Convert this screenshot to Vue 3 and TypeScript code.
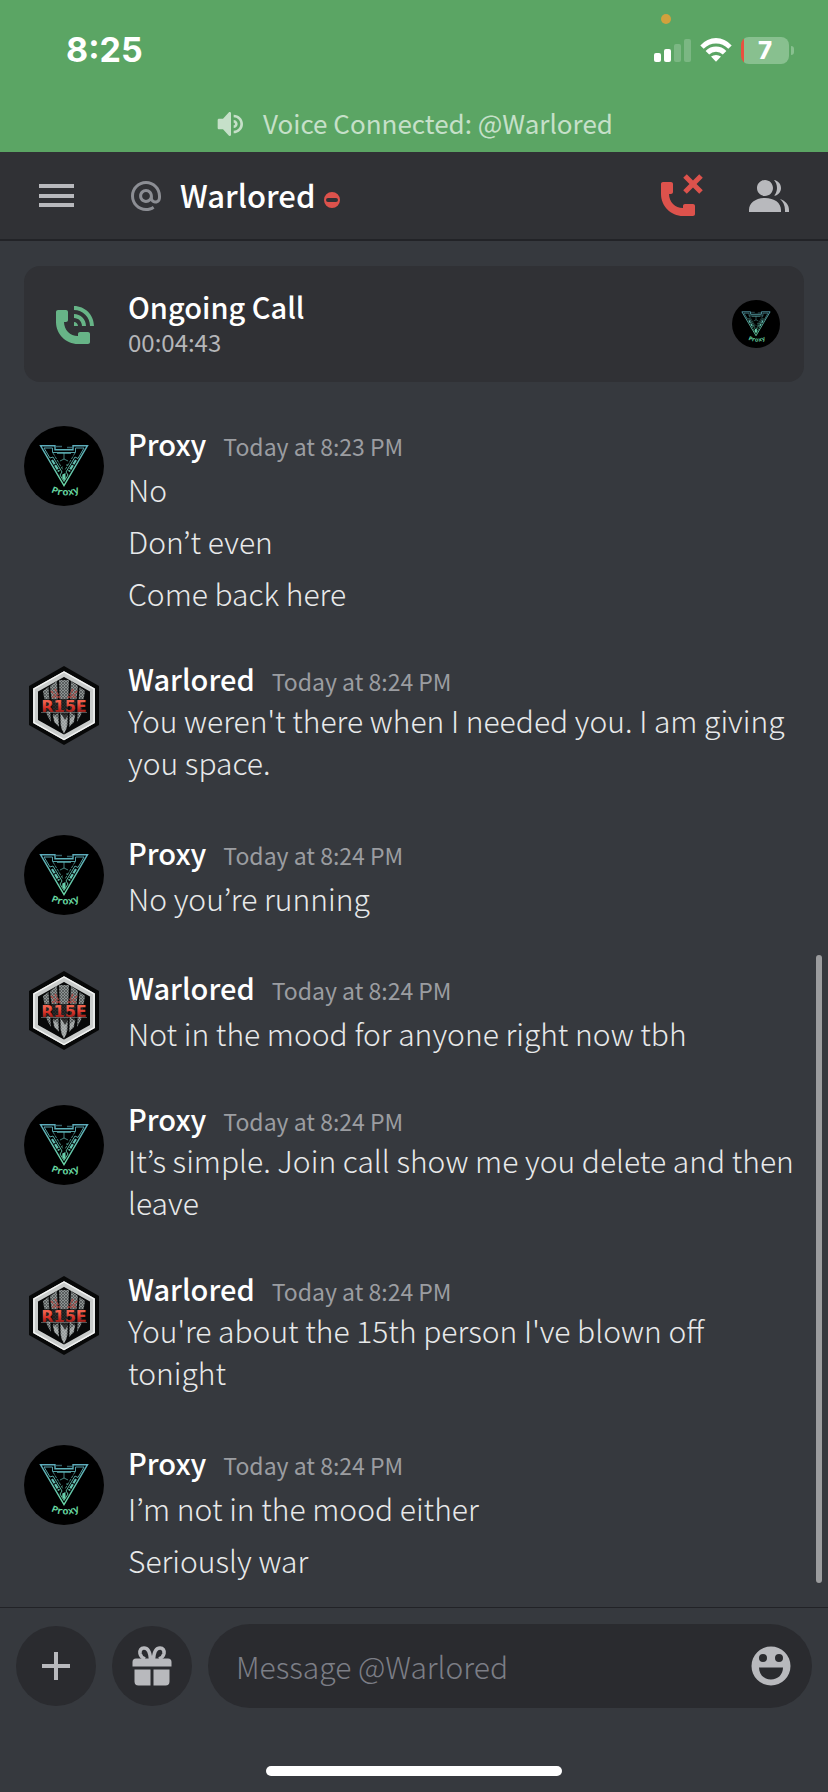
<script setup lang="ts">
import { ref } from 'vue'

type Author = 'Proxy' | 'Warlored'

interface MessageGroup {
  id: number
  author: Author
  time: string
  lines: string[]
  long?: boolean
}

const avatars: Record<Author, string> = {
  Proxy: '#avatar-proxy',
  Warlored: '#avatar-rise',
}

const groups: MessageGroup[] = [
  { id: 1, author: 'Proxy', time: 'Today at 8:23 PM', lines: ['No', 'Don’t even', 'Come back here'] },
  { id: 2, author: 'Warlored', time: 'Today at 8:24 PM', lines: ["You weren't there when I needed you. I am giving you space."], long: true },
  { id: 3, author: 'Proxy', time: 'Today at 8:24 PM', lines: ['No you’re running'] },
  { id: 4, author: 'Warlored', time: 'Today at 8:24 PM', lines: ['Not in the mood for anyone right now tbh'] },
  { id: 5, author: 'Proxy', time: 'Today at 8:24 PM', lines: ['It’s simple. Join call show me you delete and then leave'], long: true },
  { id: 6, author: 'Warlored', time: 'Today at 8:24 PM', lines: ["You're about the 15th person I've blown off tonight"], long: true },
  { id: 7, author: 'Proxy', time: 'Today at 8:24 PM', lines: ['I’m not in the mood either', 'Seriously war'] },
]

const draft = ref('')
</script>

<template>
  <div class="app">
    <svg class="sprites" aria-hidden="true">
      <defs>
        <linearGradient id="neon" x1="0" y1="18" x2="0" y2="70" gradientUnits="userSpaceOnUse">
          <stop offset="0" stop-color="#5ba9bb" />
          <stop offset="1" stop-color="#6ee3a0" />
        </linearGradient>
        <linearGradient id="crimson" x1="0" y1="0" x2="0" y2="1">
          <stop offset="0.3" stop-color="#f0604c" />
          <stop offset="0.6" stop-color="#d22f26" />
          <stop offset="0.9" stop-color="#7a1a16" />
        </linearGradient>
        <pattern id="weave" width="3" height="3" patternUnits="userSpaceOnUse">
          <rect width="3" height="3" fill="#8c9291" />
          <path d="M0 0L3 3M3 0L0 3" stroke="#474c4c" stroke-width="0.7" />
        </pattern>
        <path id="smile" d="M25 65Q40 74 58 65" />
        <symbol id="avatar-proxy" viewBox="0 0 80 80">
          <circle cx="40" cy="40" r="40" fill="#000" />
          <g fill="none" stroke="url(#neon)">
            <path d="M16.5 19.7H31V23.8H49V19.7H63.5L40 59.5Z" stroke-width="1.4" />
            <path d="M20 22H28.5V26.5H51.500V22H60L54 32.500" stroke-width="0.9" />
            <path d="M20 22L26 32L29 31L38 46L36 49L40 55.500L44 49L42 46L51 31L54 32.500" stroke-width="0.9" />
            <path d="M29 27L39 44M51 27L41 44" stroke-width="0.7" stroke-dasharray="3 1" />
            <path d="M40 27V33M33 27.500H47M36 35L40 33L44 35M38 41H38.800M43 38V40" stroke-width="0.7" />
            <path d="M28 34L35 45.500M52 34L45 45.500" stroke-width="2.200" stroke-dasharray="5 1" />
            <path d="M32 20.500H38M43 21.500H48" stroke-width="1.300" opacity="0.55" />
          </g>
          <path d="M38.300 48.500L41.500 47V53L40 54.500L38.300 52Z" fill="url(#neon)" />
          <text class="proxy-mark" fill="#68d6a1"><textPath href="#smile" startOffset="50%" text-anchor="middle">Proxy</textPath></text>
        </symbol>
        <symbol id="avatar-rise" viewBox="0 0 80 80">
          <path d="M40 1L75 21V60L40 80L5 60V21Z" fill="#070808" />
          <path d="M40 9L68.500 25V56.500L40 72.500L11.500 56.500V25Z" fill="#080909" stroke="#c9cccb" stroke-width="5" />
          <path d="M40 7L70 24V57.500L40 74.500L10 57.500V24Z" fill="none" stroke="#f4f5f4" stroke-width="1.400" />
          <g fill="url(#weave)">
            <path d="M19 26L24.500 22L27 57L23 50Z" />
            <path d="M26 21L33 16L35 62L30 57Z" />
            <path d="M35 15H45L43.500 60L40 69L36.500 60Z" />
            <path d="M47 16L54 21L50 57L45 62Z" />
            <path d="M55.500 22L61 26L57 50L53 57Z" />
          </g>
          <path d="M37 50H43L42.500 64L40 68L37.500 64ZM28.500 50L34 54V60L31 57ZM51.500 50L46 54V60L49 57Z" fill="#c3c8c6" opacity="0.6" />
          <path d="M27 26L34 33M31 24L36 33M53 26L46 33M49 24L44 33M28 32H35M45 32H52" fill="none" stroke="#b5453f" stroke-width="1.600" stroke-dasharray="3 1" opacity="0.8" />
          <path d="M15 34H65V46.500H56L50 50L46 47L41 55L36 47L31 50L25 46.500H15Z" fill="#090909" opacity="0.75" />
          <text class="rise-mark" x="40" y="46.500" text-anchor="middle" fill="url(#crimson)">R15E</text>
          <path d="M17 47.500H63" stroke="#bfc3c2" stroke-width="0.6" opacity="0.7" />
        </symbol>
      </defs>
    </svg>

    <header class="top">
      <div class="status">
        <span class="clock">8:25</span>
        <div class="indicators">
          <i class="mic-dot"></i>
          <svg class="signal" viewBox="0 0 37 23" aria-label="Signal">
            <rect y="14" width="7" height="9" rx="2" fill="#fff" />
            <rect x="10" y="10" width="7" height="13" rx="2" fill="#fff" />
            <rect x="20" y="5" width="7" height="18" rx="2" fill="#fff" opacity="0.2" />
            <rect x="30" width="7" height="23" rx="2" fill="#fff" opacity="0.2" />
          </svg>
          <svg class="wifi" viewBox="0 0 32 24" aria-label="Wi-Fi" fill="#fff">
            <path d="M0.300 7.500Q7 0 16 0T31.700 7.500L28.300 10.800Q23 5.500 16 5.500T3.700 10.800Z" />
            <path d="M5.600 13Q10 8.600 16 8.600T26.400 13L22.800 16.400Q20 13.800 16 13.800T9.200 16.400Z" />
            <path d="M11 18.600Q13.200 16.900 16 16.900T21 18.600L16 23.800Z" />
          </svg>
          <span class="battery"><b>7</b></span>
        </div>
      </div>
      <div class="voice">
        <svg viewBox="0 0 24 24" aria-hidden="true"><path d="M11.383 3.079C11.009 2.925 10.579 3.010 10.293 3.296L6 8.002H3C2.450 8.002 2 8.453 2 9.002V15.002C2 15.552 2.450 16.002 3 16.002H6L10.293 20.710C10.579 20.996 11.009 21.082 11.383 20.927C11.757 20.772 12 20.407 12 20.002V4.002C12 3.599 11.757 3.232 11.383 3.079ZM14 5.002V7.002C16.757 7.002 19 9.246 19 12.002C19 14.759 16.757 17.002 14 17.002V19.002C17.860 19.002 21 15.863 21 12.002C21 8.143 17.860 5.002 14 5.002ZM14 9.002C15.654 9.002 17 10.349 17 12.002C17 13.657 15.654 15.002 14 15.002V13.002C14.551 13.002 15 12.553 15 12.002C15 11.451 14.551 11.002 14 11.002V9.002Z" /></svg>
        <span>Voice Connected: @Warlored</span>
      </div>
    </header>

    <nav class="bar">
      <button class="icon-btn menu" type="button" aria-label="Menu">
        <svg viewBox="0 0 35 23"><path d="M0 0H35V4H0ZM0 10H35V14H0ZM0 19H35V23H0Z" /></svg>
      </button>
      <svg class="at" viewBox="0 0 24 24" aria-hidden="true"><path d="M12 2C6.486 2 2 6.486 2 12C2 17.515 6.486 22 12 22C14.039 22 15.993 21.398 17.652 20.259L16.521 18.611C15.195 19.519 13.633 20 12 20C7.589 20 4 16.411 4 12C4 7.589 7.589 4 12 4C16.411 4 20 7.589 20 12V12.782C20 14.170 19.402 15 18.400 15L18.398 15.018C18.338 15.005 18.273 15 18.209 15H18C17.437 15 16.600 14.182 16.600 13.631V12C16.600 9.464 14.537 7.400 12 7.400C9.463 7.400 7.400 9.463 7.400 12C7.400 14.537 9.463 16.600 12 16.600C13.234 16.600 14.350 16.106 15.177 15.313C15.826 16.269 16.930 17 18 17L18.002 16.981C18.064 16.994 18.129 17 18.195 17H18.400C20.552 17 22 15.306 22 12.782V12C22 6.486 17.514 2 12 2ZM12 14.599C10.566 14.599 9.400 13.433 9.400 11.999C9.400 10.565 10.566 9.399 12 9.399C13.434 9.399 14.600 10.565 14.600 11.999C14.600 13.433 13.434 14.599 12 14.599Z" /></svg>
      <h1>Warlored</h1>
      <svg class="dnd" viewBox="0 0 16 16" aria-label="Do not disturb"><path fill-rule="evenodd" d="M8 0A8 8 0 0 1 8 16A8 8 0 0 1 8 0ZM4 6A2 2 0 0 0 4 10H12A2 2 0 0 0 12 6Z" /></svg>
      <div class="actions">
        <button class="icon-btn hangup" type="button" aria-label="End call">
          <svg viewBox="0 0 24 24"><path d="M21.117 1.116L22.884 2.884L19.768 6L22.884 9.116L21.117 10.884L18 7.768L14.884 10.884L13.117 9.116L16.233 6L13.117 2.884L14.884 1.116L18 4.232L21.117 1.116ZM18 22H13C6.925 22 2 17.075 2 11V6C2 5.447 2.448 5 3 5H7C7.553 5 8 5.447 8 6V10C8 10.553 7.553 11 7 11H6C6.063 14.938 9 18 13 18V17C13 16.447 13.447 16 14 16H18C18.553 16 19 16.447 19 17V21C19 21.553 18.553 22 18 22Z" /></svg>
        </button>
        <button class="icon-btn" type="button" aria-label="Members">
          <svg viewBox="0 0 24 24"><path d="M14 8.006C14 10.211 12.206 12.006 10 12.006C7.795 12.006 6 10.211 6 8.006C6 5.801 7.794 4.006 10 4.006C12.206 4.006 14 5.801 14 8.006ZM2 19.006C2 15.473 5.290 13.006 10 13.006C14.711 13.006 18 15.473 18 19.006V20.006H2V19.006ZM20 20.006H22V19.006C22 16.443 20.270 14.441 17.521 13.535C19.062 14.913 20 16.806 20 19.006V20.006ZM14.883 11.908C16.666 11.504 18 9.908 18 8.006C18 5.969 16.469 4.282 14.497 4.037C15.432 5.095 16 6.485 16 8.006C16 9.449 15.489 10.774 14.638 11.810C14.720 11.842 14.802 11.874 14.883 11.908Z" /></svg>
        </button>
      </div>
    </nav>

    <main class="chat">
      <section class="call">
        <svg class="call-icon" viewBox="0 0 24 24" aria-hidden="true"><path d="M11 5V3C16.515 3 21 7.486 21 13H19C19 8.589 15.411 5 11 5ZM17 13H15C15 10.795 13.206 9 11 9V7C14.309 7 17 9.691 17 13ZM11 11V13H13C13 11.896 12.105 11 11 11ZM14 16H18C18.553 16 19 16.447 19 17V21C19 21.553 18.553 22 18 22H13C6.925 22 2 17.075 2 11V6C2 5.448 2.447 5 3 5H7C7.553 5 8 5.448 8 6V10C8 10.553 7.553 11 7 11H6C6.063 14.938 9 18 13 18V17C13 16.447 13.447 16 14 16Z" /></svg>
        <div class="call-text">
          <h2>Ongoing Call</h2>
          <p>00:04:43</p>
        </div>
        <svg class="call-avatar" viewBox="0 0 80 80" aria-hidden="true"><use href="#avatar-proxy" /></svg>
      </section>

      <article v-for="g in groups" :key="g.id" class="group" :class="{ long: g.long }">
        <svg class="avatar" viewBox="0 0 80 80" aria-hidden="true"><use :href="avatars[g.author]" /></svg>
        <div class="content">
          <div class="meta">
            <h3>{{ g.author }}</h3>
            <time>{{ g.time }}</time>
          </div>
          <p v-for="line in g.lines" :key="line">{{ line }}</p>
        </div>
      </article>
      <div class="scrollbar"></div>
    </main>

    <footer class="composer">
      <form class="row" @submit.prevent>
        <button class="round" type="button" aria-label="Add attachment">
          <svg viewBox="0 0 40 40"><path d="M18 6H22V18H34V22H22V34H18V22H6V18H18Z" /></svg>
        </button>
        <button class="round" type="button" aria-label="Send a gift">
          <svg viewBox="0 0 40 40">
            <path d="M0.500 20.500V16Q0.500 12.500 4 12.500H36Q39.500 12.500 39.500 16V20.500ZM2.500 23.500H18.500V39.500H6.500Q2.500 39.500 2.500 35.500ZM21.500 23.500H37.500V35.500Q37.500 39.500 33.500 39.500H21.500Z" />
            <path d="M18.500 13C18 5.500 15.500 2 12 2C9 2 7.500 4.500 8 7.500C8.500 10 10.500 12 13 13M21.500 13C22 5.500 24.500 2 28 2C31 2 32.500 4.500 32 7.500C31.500 10 29.500 12 27 13" fill="none" stroke="#b8b9bd" stroke-width="3.600" />
          </svg>
        </button>
        <div class="field">
          <input v-model="draft" type="text" placeholder="Message @Warlored" aria-label="Message @Warlored" />
          <button class="emoji" type="button" aria-label="Emoji">
            <svg viewBox="0 0 40 40"><path fill-rule="evenodd" d="M20 0.500A19.500 19.500 0 0 1 20 39.500A19.500 19.500 0 0 1 20 0.500ZM12 8A4 4 0 0 0 12 16A4 4 0 0 0 12 8ZM28 8A4 4 0 0 0 28 16A4 4 0 0 0 28 8ZM8 21.500C8 28.500 13 33.500 20 33.500S32 28.500 32 21.500Z" /></svg>
          </button>
        </div>
      </form>
      <div class="home"></div>
    </footer>
  </div>
</template>

<style>
body {
  margin: 0;
  background: #36393e;
}
</style>

<style scoped>
.app {
  display: flex;
  flex-direction: column;
  min-height: 100vh;
  background: #36393e;
  color: #e8e9ea;
  font-family: "Noto Sans CJK KR", "Noto Sans", sans-serif;
  font-weight: 300;
}
.sprites {
  position: absolute;
  width: 0;
  height: 0;
}
.proxy-mark {
  font: 700 10px "Liberation Mono", monospace;
}
.rise-mark {
  font: 700 16px "DejaVu Sans", sans-serif;
}
h1, h2, h3, p {
  margin: 0;
}
button {
  display: flex;
  align-items: center;
  justify-content: center;
  padding: 0;
  border: 0;
  background: none;
  fill: #b8b9bd;
}
.top {
  display: flex;
  flex-direction: column;
  height: 152px;
  background: #5ba564;
}
.status {
  display: flex;
  align-items: center;
  justify-content: space-between;
  height: 100px;
  padding: 0 34px 0 66px;
  box-sizing: border-box;
}
.clock {
  color: #fff;
  font: 700 34px/40px Inter, sans-serif;
}
.indicators {
  position: relative;
  display: flex;
  align-items: center;
  gap: 9px;
}
.mic-dot {
  position: absolute;
  top: -23px;
  left: 7px;
  width: 10px;
  height: 10px;
  border-radius: 50%;
  background: #d2a13d;
}
.signal {
  width: 37px;
  height: 23px;
}
.wifi {
  width: 32px;
  height: 24px;
}
.battery {
  position: relative;
  display: flex;
  align-items: center;
  justify-content: center;
  width: 48px;
  height: 27px;
  margin-right: 5px;
  border-radius: 8px;
  background: linear-gradient(90deg, #e9503f 3px, #88c08f 3px);
  color: #fff;
}
.battery::after {
  content: "";
  position: absolute;
  left: 50px;
  width: 3px;
  height: 9px;
  border-radius: 0 4px 4px 0;
  background: #88c08f;
}
.battery b {
  font: 800 24px/27px Inter, sans-serif;
}
.voice {
  display: flex;
  align-items: center;
  justify-content: center;
  gap: 16px;
  height: 48px;
  color: #c6e0c9;
  font-size: 26px;
  line-height: 36px;
  font-weight: 400;
}
.voice span {
  padding-bottom: 2px;
}
.voice svg {
  width: 32px;
  height: 32px;
  fill: #c6e0c9;
}
.bar {
  display: flex;
  align-items: center;
  height: 87px;
  padding: 0 35px 0 39px;
  background: #303135;
  border-bottom: 2px solid #222327;
}
.menu svg {
  width: 35px;
  height: 23px;
}
.at {
  width: 36px;
  height: 36px;
  margin: 0 16px 0 54px;
  fill: #8c8e94;
}
.bar h1 {
  padding-bottom: 2px;
  color: #fff;
  font-size: 31px;
  line-height: 42px;
  font-weight: 500;
}
.dnd {
  width: 16px;
  height: 16px;
  margin: 8px 0 0 9px;
  fill: #dd524c;
}
.actions {
  display: flex;
  gap: 40px;
  margin-left: auto;
}
.actions svg {
  display: block;
  width: 48px;
  height: 48px;
}
.hangup {
  fill: #dd524c;
}
.chat {
  position: relative;
  display: flex;
  flex: 1;
  flex-direction: column;
  padding: 25px 24px 24px;
}
.call {
  display: flex;
  align-items: center;
  height: 116px;
  margin-bottom: 44px;
  padding: 0 24px 0 28px;
  border-radius: 16px;
  background: #303135;
}
.call-icon {
  width: 48px;
  height: 48px;
  fill: #67b487;
}
.call-text {
  flex: 1;
  margin-left: 28px;
  padding-bottom: 2px;
}
.call-text h2 {
  color: #fff;
  font-size: 29px;
  line-height: 38px;
  font-weight: 500;
}
.call-text p {
  color: #b5b6b9;
  font-size: 24px;
  line-height: 34px;
  font-weight: 400;
}
.call-avatar {
  width: 48px;
  height: 48px;
}
.group {
  display: flex;
  gap: 24px;
  padding-bottom: 51px;
}
.group.long {
  padding-bottom: 52px;
}
.group:last-of-type {
  padding-bottom: 0;
}
.avatar {
  flex: none;
  width: 80px;
  height: 80px;
}
.content {
  flex: 1;
  min-width: 0;
  padding-top: 4px;
}
.long .content {
  padding-top: 0;
}
.meta {
  display: flex;
  align-items: baseline;
  gap: 17px;
  height: 34px;
}
.meta h3 {
  color: #fff;
  font-size: 29px;
  line-height: 26px;
  font-weight: 500;
}
.meta time {
  color: #9b9da1;
  font-size: 23px;
  line-height: 26px;
  font-weight: 400;
}
.content p {
  margin-top: 4px;
  font-size: 30px;
  line-height: 42px;
}
.content p + p {
  margin-top: 10px;
}
.long .content p {
  margin-top: 0;
}
.scrollbar {
  position: absolute;
  right: 6px;
  bottom: 24px;
  width: 6px;
  height: 46%;
  border-radius: 3px;
  background: #9b9c9e;
}
.composer {
  display: flex;
  flex-direction: column;
  align-items: center;
  gap: 58px;
  padding: 16px 16px 16px;
  border-top: 1px solid #222327;
}
.row {
  display: flex;
  align-items: center;
  gap: 16px;
  width: 100%;
}
.round {
  flex: none;
  width: 80px;
  height: 80px;
  border-radius: 50%;
  background: #2a2b2f;
}
.round svg, .emoji svg {
  width: 40px;
  height: 40px;
}
.field {
  display: flex;
  flex: 1;
  align-items: center;
  height: 84px;
  padding: 0 21px 0 28px;
  border-radius: 42px;
  background: #2a2b2f;
}
.field input {
  flex: 1;
  min-width: 0;
  padding: 0;
  border: 0;
  outline: 0;
  background: none;
  color: #e8e9ea;
  font: inherit;
  font-size: 30px;
  line-height: 42px;
}
.field input::placeholder {
  color: #7c7e86;
  opacity: 1;
}
.home {
  width: 296px;
  height: 10px;
  border-radius: 5px;
  background: #fff;
}
</style>
